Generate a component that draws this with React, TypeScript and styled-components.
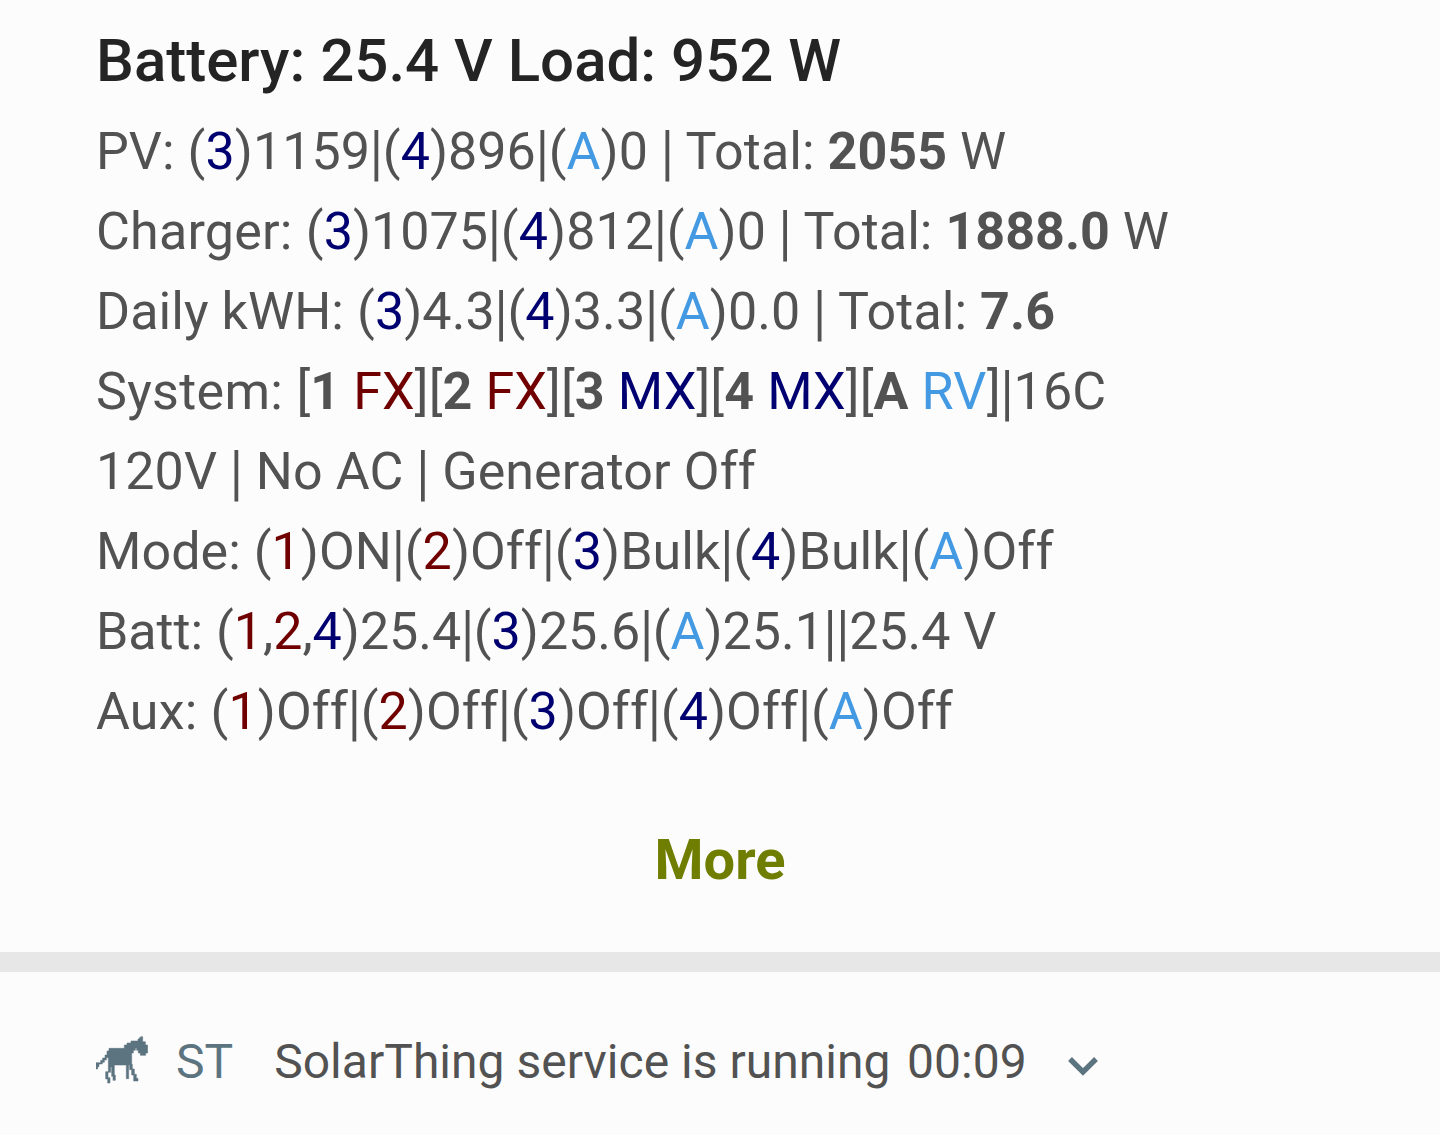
import React, { Fragment } from 'react';
import styled, { createGlobalStyle } from 'styled-components';

const Global = createGlobalStyle`
  * { box-sizing: border-box; }
  body { margin: 0; background: #fcfcfc; font-family: Roboto, sans-serif; }
`;
const Page = styled.main`
  width: 1440px; height: 1135px; overflow: hidden; background: #fcfcfc;
  display: flex; flex-direction: column;
`;
const Card = styled.section`
  height: 952px; padding: 21px 96px 0; display: flex; flex-direction: column; flex: none;
`;
const Title = styled.h1`
  margin: 0 0 11px; font-size: 60px; line-height: 80px; font-weight: 500; color: #242424; white-space: pre;
`;
const Line = styled.div<{ $spacing: number }>`
  height: 80px; line-height: 80px; font-size: 52px; color: #525252; white-space: pre;
  letter-spacing: ${p => p.$spacing}px;
`;
const Label = styled.span<{ $spacing: number }>`letter-spacing: ${p => p.$spacing}px;`;
const colors = { r: '#700000', n: '#000070', b: '#4499e3' };
const C = styled.span<{ $c: keyof typeof colors }>`color: ${p => colors[p.$c]};`;
const B = styled.b`font-weight: 700;`;
const Bar = styled.span`display: inline-block; transform: translateY(2px) scaleY(1.16);`;
const More = styled.button`
  border: 0; background: none; padding: 0; margin: 68px auto 0; font: 700 56px/80px Roboto, sans-serif; color: #6f7d00;
`;
const Divider = styled.div`height: 20px; background: #e7e7e7; flex: none;`;
const Footer = styled.footer`
  flex: 1; display: flex; padding: 50px 96px 0; font-size: 48px; line-height: 80px; color: #525252; white-space: pre;
`;
const AppName = styled.span`color: #5c7480; margin-left: 28px;`;
const Msg = styled.span`margin-left: 41px; letter-spacing: 0.03px;`;
const Time = styled.span`margin-left: 16.5px;`;
const Horse = styled.svg`margin-top: 14px; flex: none;`;
const Chevron = styled.svg`margin: 34px 0 0 40.5px; flex: none;`;

/** Text whose "|" separators are drawn as tall bars. */
function T({ children }: { children: string }) {
  return <>{children.split('|').map((part, i) => <Fragment key={i}>{i > 0 && <Bar>|</Bar>}{part}</Fragment>)}</>;
}

export default function App() {
  const three = <>(<C $c="n">3</C>)</>;
  const four = <>(<C $c="n">4</C>)</>;
  const a = <>(<C $c="b">A</C>)</>;
  const one = <>(<C $c="r">1</C>)</>;
  const two = <>(<C $c="r">2</C>)</>;
  return (
    <Page>
      <Global />
      <Card>
        <Title>Battery: 25.4 V Load: 952 W</Title>
        <Line $spacing={0.05}>PV: {three}<T>1159|</T>{four}<T>896|</T>{a}<T>0 | Total: </T><B>2055</B> W</Line>
        <Line $spacing={0.04}><Label $spacing={0.22}>Charger: </Label>{three}<T>1075|</T>{four}<T>812|</T>{a}<T>0 | Total: </T><B>1888.0</B> W</Line>
        <Line $spacing={0.065}>Daily kWH: {three}<T>4.3|</T>{four}<T>3.3|</T>{a}<T>0.0 | Total: </T><B>7.6</B></Line>
        <Line $spacing={0.1}><Label $spacing={0.3}>System: </Label>[<B>1</B> <C $c="r">FX</C>][<B>2</B> <C $c="r">FX</C>][<B>3</B> <C $c="n">MX</C>][<B>4</B> <C $c="n">MX</C>][<B>A</B> <C $c="b">RV</C><T>]|16C</T></Line>
        <Line $spacing={0.08}><T>120V | No AC | Generator Off</T></Line>
        <Line $spacing={0.045}>Mode: {one}<T>ON|</T>{two}<T>Off|</T>{three}<T>Bulk|</T>{four}<T>Bulk|</T>{a}Off</Line>
        <Line $spacing={-0.03}>Batt: (<C $c="r">1</C>,<C $c="r">2</C>,<C $c="n">4</C><T>)25.4|</T>{three}<T>25.6|</T>{a}<T>25.1||25.4 V</T></Line>
        <Line $spacing={0.04}><Label $spacing={0.2}>Aux: </Label>{one}<T>Off|</T>{two}<T>Off|</T>{three}<T>Off|</T>{four}<T>Off|</T>{a}Off</Line>
        <More>More</More>
      </Card>
      <Divider />
      <Footer>
        <Horse width="52" height="48" viewBox="33 33 156 144" fill="#5c7480" stroke="#5c7480" strokeWidth="1.6">
          <path d="M167 35H173V50H181V60H188V84H182V91H166V84H160V76H155V70H151V76H145V84H140V118H142V132H148V148H154V160H159V168H146V150H140V134H134V120H131V161H124V120H88V150H91V166H84V154H80V126H77V142H69V158H75V174H68V162H62V140H70V98H64V105H58V112H52V117H42V125H38V132H33V113H47V106H53V99H60V90H66V78H72V70H118V60H126V54H138V48H159V42H163V38H167Z" />
        </Horse>
        <AppName>ST</AppName><Msg>SolarThing service is running</Msg><Time>00:09</Time>
        <Chevron width="32" height="22" viewBox="0 0 32 22"><path d="M3 3L16 16L29 3" fill="none" stroke="#5c7480" strokeWidth="5.4" /></Chevron>
      </Footer>
    </Page>
  );
}
